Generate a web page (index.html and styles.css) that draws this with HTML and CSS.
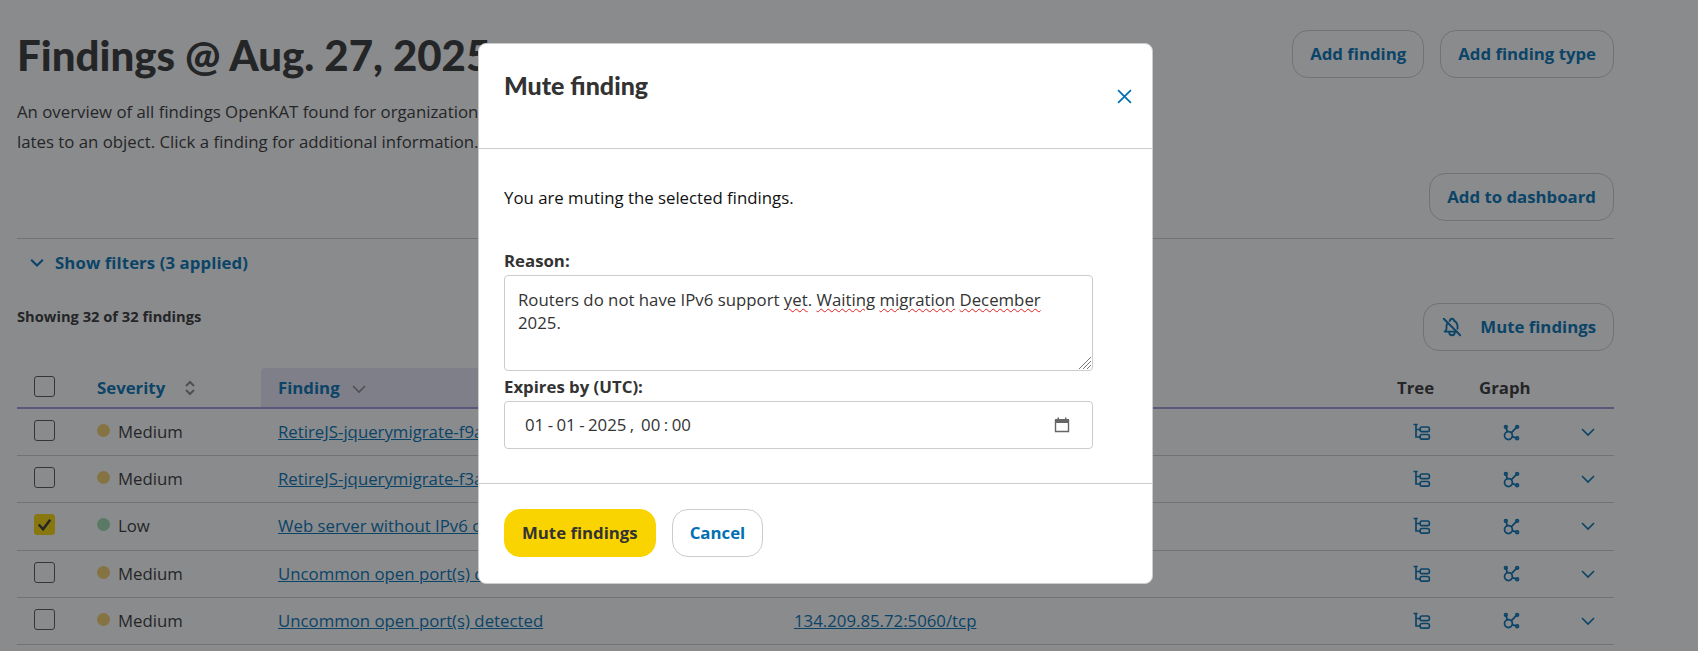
FILE: index.html
```html
<!DOCTYPE html>
<html lang="en">
<head>
  <meta charset="UTF-8" />
  <title>Findings - OpenKAT</title>
  <link rel="stylesheet" href="styles.css">
</head>
<body>

<main class="page">
  <div class="page-head">
    <h1>Findings @ Aug. 27, 2025</h1>
    <div class="actions">
      <a class="btn" href="#">Add finding</a>
      <a class="btn" href="#">Add finding type</a>
    </div>
  </div>

  <p class="intro">
    An overview of all findings OpenKAT found for organization Test. Each finding re<br>
    lates to an object. Click a finding for additional information.
  </p>

  <div class="dashboard-row">
    <a class="btn" href="#">Add to dashboard</a>
  </div>

  <div class="filters">
    <svg class="filters-icon" viewBox="0 0 24 24"><path d="M5 8l7 7 7-7" /></svg>
    <span>Show filters (3 applied)</span>
  </div>

  <div class="count-row">
    <span class="count">Showing 32 of 32 findings</span>
    <a class="btn btn-icon" href="#">
      <svg viewBox="0 0 24 24"><path d="M9.346 5.353c.21-.129.428-.246.654-.353a2 2 0 1 1 4 0a7 7 0 0 1 4 6v3m-1 3h-13a4 4 0 0 0 2-3v-3a6.996 6.996 0 0 1 1.273-3.707" /><path d="M9 17v1a3 3 0 0 0 6 0v-1" /><path d="M3 3l18 18" /></svg>
      Mute findings
    </a>
  </div>

  <table class="findings">
    <colgroup>
      <col class="col-check"><col class="col-severity"><col class="col-finding"><col class="col-object"><col class="col-tree"><col class="col-graph"><col class="col-more">
    </colgroup>
    <thead>
      <tr>
        <th class="cell-check"><span class="box"></span></th>
        <th class="sortable">
          Severity
          <svg class="sort-icon" viewBox="0 0 12 18"><path d="M2 7l4-4 4 4" /><path d="M2 11l4 4 4-4" /></svg>
        </th>
        <th class="sortable sorted">
          Finding
          <svg class="sorted-icon" viewBox="0 0 14 10"><path d="M1 2l6 6 6-6" /></svg>
        </th>
        <th>Object</th>
        <th>Tree</th>
        <th>Graph</th>
        <th></th>
      </tr>
    </thead>
    <tbody>
      <tr>
        <td class="cell-check"><span class="box"></span></td>
        <td><span class="dot dot-medium"></span>Medium</td>
        <td><a href="#">RetireJS-jquerymigrate-f9a1c27b</a></td>
        <td><a href="#">134.209.85.72:80/tcp</a></td>
        <td><svg class="icon icon-tree" viewBox="0 0 24 24"><path d="M3 3h5M6 3v15h5M6 9h5" /><rect x="11" y="6" width="11" height="5.5" rx="2" /><rect x="11" y="15" width="11" height="5.5" rx="2" /></svg></td>
        <td><svg class="icon icon-graph" viewBox="0 0 24 24"><path d="M5.931 6.936l1.275 4.249m5.607 5.609l4.251 1.275M11.683 12.317l5.759-5.759" /><circle cx="5.5" cy="5.5" r="1.5" /><circle cx="18.5" cy="5.5" r="1.5" /><circle cx="18.5" cy="18.5" r="1.5" /><circle cx="8.5" cy="15.5" r="4.5" /></svg></td>
        <td><svg class="icon icon-more" viewBox="0 0 14 10"><path d="M1 2l6 6 6-6" /></svg></td>
      </tr>
      <tr>
        <td class="cell-check"><span class="box"></span></td>
        <td><span class="dot dot-medium"></span>Medium</td>
        <td><a href="#">RetireJS-jquerymigrate-f3a8e610</a></td>
        <td><a href="#">134.209.85.72:443/tcp</a></td>
        <td><svg class="icon icon-tree" viewBox="0 0 24 24"><path d="M3 3h5M6 3v15h5M6 9h5" /><rect x="11" y="6" width="11" height="5.5" rx="2" /><rect x="11" y="15" width="11" height="5.5" rx="2" /></svg></td>
        <td><svg class="icon icon-graph" viewBox="0 0 24 24"><path d="M5.931 6.936l1.275 4.249m5.607 5.609l4.251 1.275M11.683 12.317l5.759-5.759" /><circle cx="5.5" cy="5.5" r="1.5" /><circle cx="18.5" cy="5.5" r="1.5" /><circle cx="18.5" cy="18.5" r="1.5" /><circle cx="8.5" cy="15.5" r="4.5" /></svg></td>
        <td><svg class="icon icon-more" viewBox="0 0 14 10"><path d="M1 2l6 6 6-6" /></svg></td>
      </tr>
      <tr>
        <td class="cell-check"><span class="box box-checked"><svg viewBox="0 0 20 20"><path d="M4 10l4.5 5L16 5" /></svg></span></td>
        <td><span class="dot dot-low"></span>Low</td>
        <td><a href="#">Web server without IPv6 configured</a></td>
        <td><a href="#">134.209.85.72</a></td>
        <td><svg class="icon icon-tree" viewBox="0 0 24 24"><path d="M3 3h5M6 3v15h5M6 9h5" /><rect x="11" y="6" width="11" height="5.5" rx="2" /><rect x="11" y="15" width="11" height="5.5" rx="2" /></svg></td>
        <td><svg class="icon icon-graph" viewBox="0 0 24 24"><path d="M5.931 6.936l1.275 4.249m5.607 5.609l4.251 1.275M11.683 12.317l5.759-5.759" /><circle cx="5.5" cy="5.5" r="1.5" /><circle cx="18.5" cy="5.5" r="1.5" /><circle cx="18.5" cy="18.5" r="1.5" /><circle cx="8.5" cy="15.5" r="4.5" /></svg></td>
        <td><svg class="icon icon-more" viewBox="0 0 14 10"><path d="M1 2l6 6 6-6" /></svg></td>
      </tr>
      <tr>
        <td class="cell-check"><span class="box"></span></td>
        <td><span class="dot dot-medium"></span>Medium</td>
        <td><a href="#">Uncommon open port(s) detected</a></td>
        <td><a href="#">134.209.85.72:22/tcp</a></td>
        <td><svg class="icon icon-tree" viewBox="0 0 24 24"><path d="M3 3h5M6 3v15h5M6 9h5" /><rect x="11" y="6" width="11" height="5.5" rx="2" /><rect x="11" y="15" width="11" height="5.5" rx="2" /></svg></td>
        <td><svg class="icon icon-graph" viewBox="0 0 24 24"><path d="M5.931 6.936l1.275 4.249m5.607 5.609l4.251 1.275M11.683 12.317l5.759-5.759" /><circle cx="5.5" cy="5.5" r="1.5" /><circle cx="18.5" cy="5.5" r="1.5" /><circle cx="18.5" cy="18.5" r="1.5" /><circle cx="8.5" cy="15.5" r="4.5" /></svg></td>
        <td><svg class="icon icon-more" viewBox="0 0 14 10"><path d="M1 2l6 6 6-6" /></svg></td>
      </tr>
      <tr>
        <td class="cell-check"><span class="box"></span></td>
        <td><span class="dot dot-medium"></span>Medium</td>
        <td><a href="#">Uncommon open port(s) detected</a></td>
        <td><a href="#">134.209.85.72:5060/tcp</a></td>
        <td><svg class="icon icon-tree" viewBox="0 0 24 24"><path d="M3 3h5M6 3v15h5M6 9h5" /><rect x="11" y="6" width="11" height="5.5" rx="2" /><rect x="11" y="15" width="11" height="5.5" rx="2" /></svg></td>
        <td><svg class="icon icon-graph" viewBox="0 0 24 24"><path d="M5.931 6.936l1.275 4.249m5.607 5.609l4.251 1.275M11.683 12.317l5.759-5.759" /><circle cx="5.5" cy="5.5" r="1.5" /><circle cx="18.5" cy="5.5" r="1.5" /><circle cx="18.5" cy="18.5" r="1.5" /><circle cx="8.5" cy="15.5" r="4.5" /></svg></td>
        <td><svg class="icon icon-more" viewBox="0 0 14 10"><path d="M1 2l6 6 6-6" /></svg></td>
      </tr>
    </tbody>
  </table>
</main>

<div class="backdrop">
  <section class="modal">
    <header class="modal-head">
      <h2>Mute finding</h2>
      <svg class="modal-close" viewBox="0 0 14 14"><path d="M1 1l12 12M13 1L1 13" /></svg>
    </header>

    <div class="modal-body">
      <p class="modal-text">You are muting the selected findings.</p>
      <label class="field-label">Reason:</label>
      <div class="textarea">
        Routers do not have IPv6 support <span class="typo">yet</span>. <span class="typo">Waiting</span> <span class="typo">migration</span> <span class="typo">December</span> 2025.
        <svg class="resizer" viewBox="0 0 14 14"><path d="M13 1L1 13M13 5L5 13M13 9L9 13" /></svg>
      </div>
      <label class="field-label field-label-tight">Expires by (UTC):</label>
      <div class="date-input">
        <span class="date-value">01 - 01 - 2025 ,&nbsp; 00 : 00</span>
        <svg class="date-icon" viewBox="0 0 16 16"><path class="date-frame" d="M1.5 3.5h13v11h-13z" /><path class="date-top" d="M1 2h2.5V0.5h1.5V2h6V0.5h1.5V2H15v4H1z" /></svg>
      </div>
    </div>

    <footer class="modal-foot">
      <a class="btn btn-primary" href="#">Mute findings</a>
      <a class="btn btn-cancel" href="#">Cancel</a>
    </footer>
  </section>
</div>

</body>
</html>
```

FILE: styles.css
```css
body {
  margin: 0;
  height: 651px;
  overflow: hidden;
  font-family: 'Open Sans', sans-serif;
  font-size: 16.8px;
  line-height: 24px;
  color: #333;
  background: #fff;
}
.page {
  padding: 30px 84px 0 17px;
}
.page-head {
  display: flex;
  justify-content: space-between;
  align-items: flex-start;
}
h1 {
  margin: 0;
  font-family: 'Lato', sans-serif;
  font-size: 42px;
  line-height: 50px;
  font-weight: 900;
  color: #333;
}
.actions {
  display: flex;
  gap: 16px;
}
.btn {
  display: inline-flex;
  align-items: center;
  box-sizing: border-box;
  height: 48px;
  padding: 0 17px;
  border: 1px solid #ccc;
  border-radius: 16px;
  color: #0070b3;
  font-weight: 700;
  text-decoration: none;
  white-space: nowrap;
}
.btn-icon {
  gap: 17px;
}
.btn-icon svg {
  width: 22px;
  height: 22px;
  fill: none;
  stroke: #0070b3;
  stroke-width: 2;
  stroke-linecap: round;
  stroke-linejoin: round;
}
.intro {
  margin: 17px 0 0;
  line-height: 30px;
  white-space: nowrap;
}
.dashboard-row {
  display: flex;
  justify-content: flex-end;
  margin-top: 16px;
  padding-bottom: 17px;
  border-bottom: 1px solid #ccc;
}
.filters {
  display: flex;
  align-items: center;
  gap: 8px;
  margin-top: 12px;
  padding-left: 10px;
  color: #0070b3;
  font-weight: 700;
  letter-spacing: 0.08px;
}
.filters-icon {
  width: 20px;
  height: 20px;
  fill: none;
  stroke: #0070b3;
  stroke-width: 2.6;
}
.count-row {
  display: flex;
  justify-content: space-between;
  align-items: flex-start;
  margin-top: 28px;
}
.count {
  padding-top: 1px;
  font-size: 14.7px;
  font-weight: 700;
}
.findings {
  width: 100%;
  table-layout: fixed;
  border-collapse: collapse;
  margin-top: 17px;
}
.col-check { width: 63px; }
.col-severity { width: 181px; }
.col-finding { width: 516px; }
.col-tree { width: 82px; }
.col-graph { width: 88px; }
.col-more { width: 64px; }
.findings th {
  height: 38px;
  padding: 1px 18px 0 17px;
  text-align: left;
  font-weight: 700;
  border-bottom: 2px solid #9a96e0;
}
.findings .sortable {
  color: #0070b3;
}
.findings .sorted {
  background: #e9e7f6;
  border-radius: 4px 4px 0 0;
}
.sort-icon {
  width: 12px;
  height: 18px;
  margin-left: 14px;
  vertical-align: -3px;
  fill: none;
  stroke: #888;
  stroke-width: 2;
}
.sorted-icon {
  width: 14px;
  height: 10px;
  margin-left: 8px;
  fill: none;
  stroke: #888;
  stroke-width: 1.6;
}
.findings td {
  height: 46.2px;
  padding: 0 18px 0 17px;
  border-bottom: 1px solid #ccc;
  white-space: nowrap;
}
.findings .cell-check {
  padding-left: 17px;
}
.findings a {
  color: #0070b3;
}
.box {
  display: block;
  box-sizing: border-box;
  width: 21px;
  height: 21px;
  margin-bottom: 3px;
  border: 1px solid #555;
  border-radius: 3px;
  background: #fff;
}
.box-checked {
  background: #fad400;
  border-color: #fad400;
}
.box-checked svg {
  display: block;
  fill: none;
  stroke: #333;
  stroke-width: 2.6;
}
.dot {
  display: inline-block;
  width: 13px;
  height: 13px;
  margin-right: 8px;
  border-radius: 50%;
  vertical-align: 1px;
}
.dot-medium { background: #f6cf6b; }
.dot-low { background: #9fdcb0; }
.icon {
  display: block;
  fill: none;
  stroke: #0070b3;
  stroke-width: 2;
}
.icon-tree {
  width: 20px;
  height: 20px;
  margin-left: 14px;
}
.icon-graph {
  width: 21px;
  height: 21px;
  margin-left: 22px;
}
.icon-more {
  width: 14px;
  height: 10px;
  margin-left: 14px;
  stroke-width: 1.6;
}
.backdrop {
  position: fixed;
  inset: 0;
  box-sizing: border-box;
  padding: 43px 0 0 478px;
  background: rgba(21, 23, 27, 0.5);
}
.modal {
  box-sizing: border-box;
  width: 675px;
  height: 541px;
  border: 1px solid #ccc;
  border-radius: 8px;
  background: #fff;
}
.modal-head {
  display: flex;
  justify-content: space-between;
  align-items: flex-start;
  box-sizing: border-box;
  height: 105px;
  padding: 25px 20px 0 25px;
  border-bottom: 1px solid #ccc;
}
.modal-head h2 {
  margin: 0;
  font-family: 'Lato', sans-serif;
  font-size: 25px;
  line-height: 32px;
  font-weight: 900;
  color: #333;
}
.modal-close {
  width: 15px;
  height: 15px;
  margin-top: 20px;
  fill: none;
  stroke: #0070b3;
  stroke-width: 1.6;
}
.modal-body {
  padding: 37px 59px 0 25px;
  height: 335px;
  box-sizing: border-box;
  border-bottom: 1px solid #ccc;
}
.modal-text {
  margin: 0 0 39px;
  color: #111;
}
.field-label {
  display: block;
  font-weight: 700;
  margin-bottom: 2px;
}
.field-label-tight {
  margin-top: 4px;
}
.textarea {
  position: relative;
  box-sizing: border-box;
  height: 96px;
  padding: 12px 13px;
  border: 1px solid #ccc;
  border-radius: 4px;
  line-height: 23px;
}
.typo {
  text-decoration: underline wavy #e02020 1px;
  text-underline-offset: 2px;
}
.resizer {
  position: absolute;
  right: 0;
  bottom: 0;
  width: 14px;
  height: 14px;
  fill: none;
  stroke: #777;
  stroke-width: 1;
}
.date-input {
  display: flex;
  justify-content: space-between;
  align-items: center;
  box-sizing: border-box;
  height: 48px;
  padding: 0 22px 0 20px;
  border: 1px solid #ccc;
  border-radius: 4px;
}
.date-value {
  word-spacing: -0.9px;
}
.date-icon {
  width: 16px;
  height: 16px;
}
.date-frame {
  fill: none;
  stroke: #666;
  stroke-width: 1.4;
}
.date-top {
  fill: #666;
}
.modal-foot {
  display: flex;
  gap: 16px;
  padding: 25px 25px 0;
}
.btn-primary {
  background: #fad400;
  border-color: #fad400;
  color: #333;
}
.btn-cancel {
  color: #0070b3;
}
```
